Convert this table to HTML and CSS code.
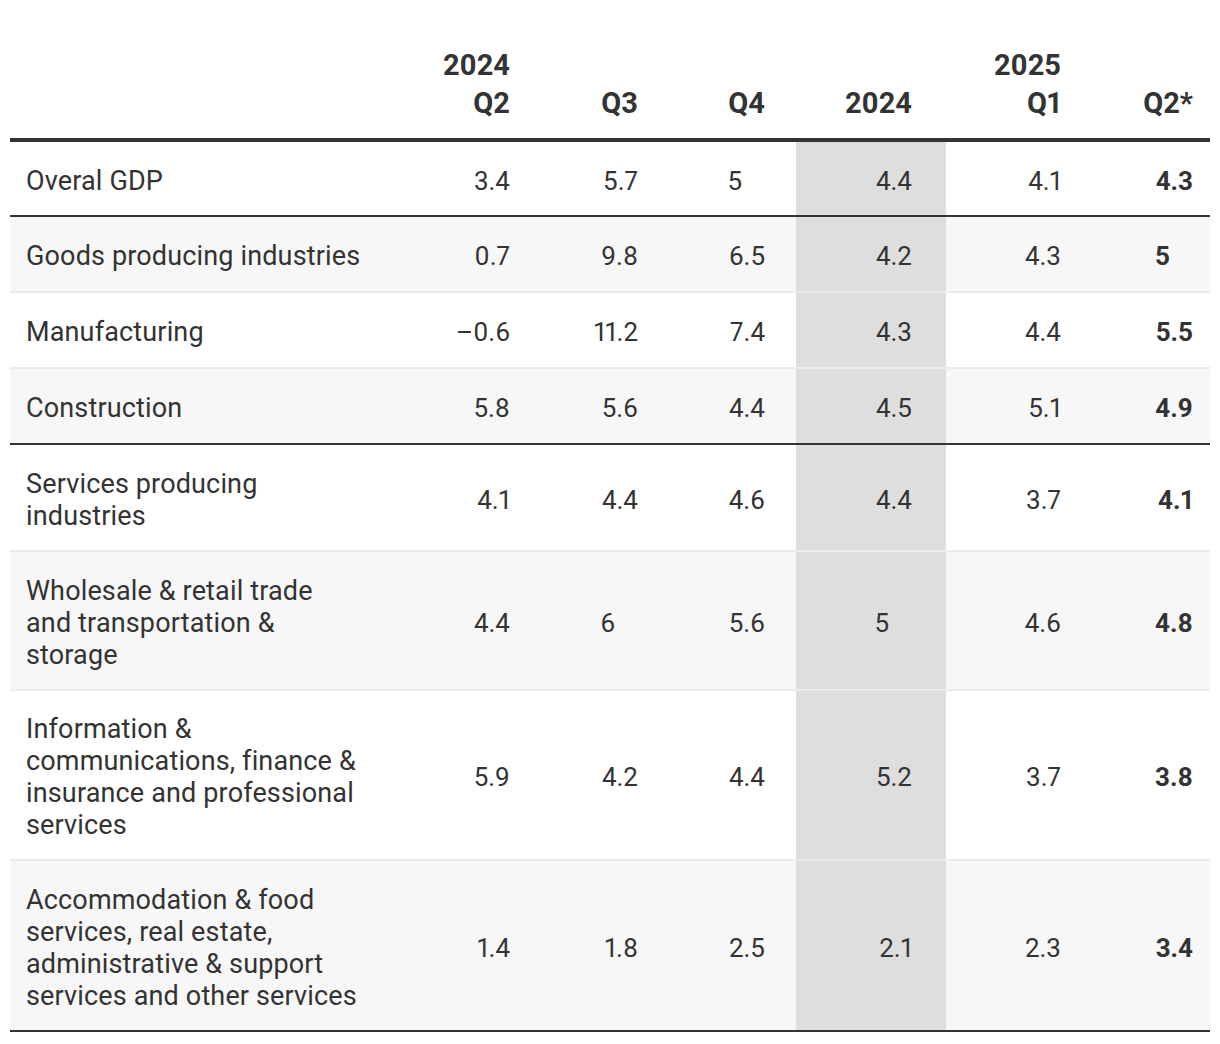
FILE: index.html
```html
<!DOCTYPE html>
<html lang="en">
<head>
<meta charset="utf-8">
<title>GDP growth by industry</title>
<link rel="stylesheet" href="styles.css">
</head>
<body>
<div class="wrap">
<table class="gdp">
  <colgroup>
    <col class="c-label">
    <col class="c-q2">
    <col class="c-q3">
    <col class="c-q4">
    <col class="c-y">
    <col class="c-q1">
    <col class="c-q2b">
  </colgroup>
  <thead>
    <tr>
      <th class="label"></th>
      <th class="n p16">2024<br>Q2</th>
      <th class="n p16">Q3</th>
      <th class="n p31">Q4</th>
      <th class="n p34">2024</th>
      <th class="n p17">2025<br>Q1</th>
      <th class="n p17">Q2*</th>
    </tr>
  </thead>
  <tbody>
    <tr class="group-end">
      <td class="label">Overal GDP</td>
      <td class="n p16">3.4</td><td class="n p16">5.7</td><td class="n p31"><span class="int">5</span></td>
      <td class="n p34 shade">4.4</td><td class="n p17">4.1</td><td class="n p17 b">4.3</td>
    </tr>
    <tr class="alt">
      <td class="label">Goods producing industries</td>
      <td class="n p16">0.7</td><td class="n p16">9.8</td><td class="n p31">6.5</td>
      <td class="n p34 shade">4.2</td><td class="n p17">4.3</td><td class="n p17 b"><span class="int">5</span></td>
    </tr>
    <tr>
      <td class="label">Manufacturing</td>
      <td class="n p16">–0.6</td><td class="n p16">11.2</td><td class="n p31">7.4</td>
      <td class="n p34 shade">4.3</td><td class="n p17">4.4</td><td class="n p17 b">5.5</td>
    </tr>
    <tr class="alt group-end">
      <td class="label">Construction</td>
      <td class="n p16">5.8</td><td class="n p16">5.6</td><td class="n p31">4.4</td>
      <td class="n p34 shade">4.5</td><td class="n p17">5.1</td><td class="n p17 b">4.9</td>
    </tr>
    <tr>
      <td class="label">Services producing industries</td>
      <td class="n p16">4.1</td><td class="n p16">4.4</td><td class="n p31">4.6</td>
      <td class="n p34 shade">4.4</td><td class="n p17">3.7</td><td class="n p17 b">4.1</td>
    </tr>
    <tr class="alt">
      <td class="label">Wholesale &amp; retail trade and transportation &amp; storage</td>
      <td class="n p16">4.4</td><td class="n p16"><span class="int">6</span></td><td class="n p31">5.6</td>
      <td class="n p34 shade"><span class="int">5</span></td><td class="n p17">4.6</td><td class="n p17 b">4.8</td>
    </tr>
    <tr>
      <td class="label">Information &amp; communications, finance &amp; insurance and professional services</td>
      <td class="n p16">5.9</td><td class="n p16">4.2</td><td class="n p31">4.4</td>
      <td class="n p34 shade">5.2</td><td class="n p17">3.7</td><td class="n p17 b">3.8</td>
    </tr>
    <tr class="alt last">
      <td class="label">Accommodation &amp; food services, real estate, administrative &amp; support services and other services</td>
      <td class="n p16">1.4</td><td class="n p16">1.8</td><td class="n p31">2.5</td>
      <td class="n p34 shade">2.1</td><td class="n p17">2.3</td><td class="n p17 b">3.4</td>
    </tr>
  </tbody>
</table>
</div>
</body>
</html>
```

FILE: styles.css
```css
html, body {
  margin: 0;
  padding: 0;
  background: #ffffff;
}

.wrap {
  padding: 0 10px;
}

.gdp {
  width: 1200px;
  table-layout: fixed;
  border-collapse: collapse;
  font-family: Roboto, "Liberation Sans", Arial, sans-serif;
  color: #333333;
  font-variant-numeric: proportional-nums;
}

.c-label { width: 352px; }
.c-q2 { width: 164px; }
.c-q3 { width: 128px; }
.c-q4 { width: 142px; }
.c-y { width: 150px; }
.c-q1 { width: 132px; }
.c-q2b { width: 132px; }

.gdp thead th {
  font-size: 29px;
  font-weight: 700;
  line-height: 38px;
  vertical-align: bottom;
  padding-top: 46px;
  padding-bottom: 16px;
  border-bottom: 4px solid #333333;
}

.gdp tbody tr {
  height: 76px;
}

.gdp td {
  font-size: 26px;
  line-height: 32px;
  font-weight: 400;
  padding-top: 22.75px;
  padding-bottom: 18px;
  border-top: 2px solid #ebebeb;
  vertical-align: middle;
}

.gdp td.label {
  font-size: 27px;
  letter-spacing: 0.15px;
}

.gdp tbody tr:first-child td {
  border-top: none;
}

.gdp tr.alt td {
  background: #f7f7f7;
}

.gdp tr.group-end td,
.gdp tr.last td {
  border-bottom: 2px solid #333333;
}

.gdp td.shade,
.gdp tr.alt td.shade {
  background: #dedede;
}

.label {
  text-align: left;
  padding-left: 16px;
  padding-right: 0;
}

.n { text-align: right; }
.p16 { padding-right: 16px; }
.p17 { padding-right: 17px; }
.p31 { padding-right: 31px; }
.p34 { padding-right: 34px; }

.gdp td.b { font-weight: 700; }

.int {
  display: inline-block;
  padding-right: 23px;
}
```
